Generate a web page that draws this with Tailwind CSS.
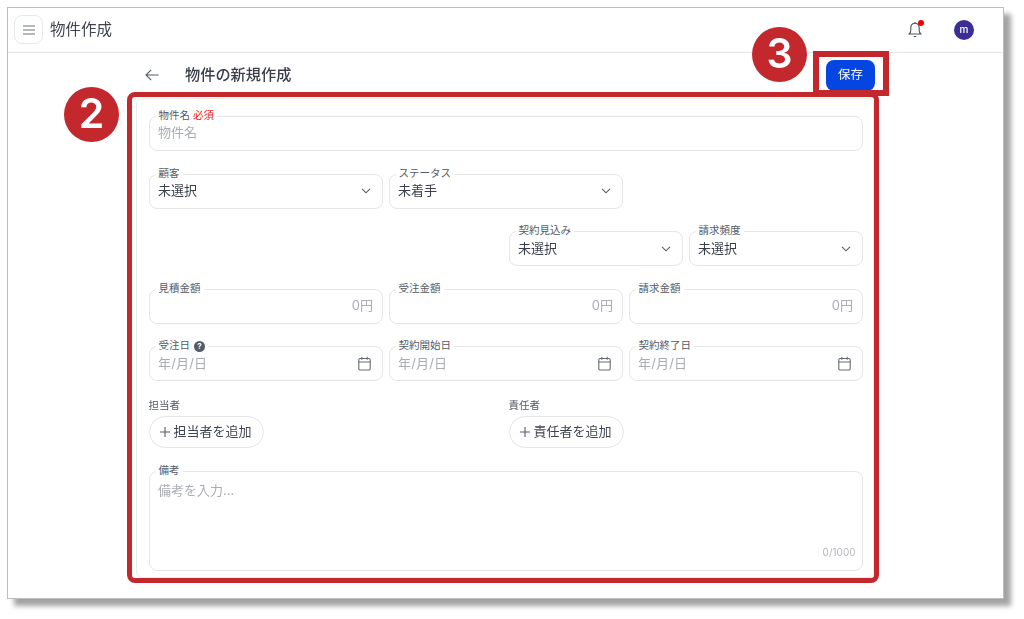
<!DOCTYPE html>
<html lang="ja">
<head>
<meta charset="utf-8">
<script src="https://cdn.jsdelivr.net/npm/@tailwindcss/browser@4"></script>
</head>
<body class="bg-white">
<div class="relative w-[1024px] h-[619px] overflow-hidden bg-white font-['Inter','Noto_Sans_CJK_JP',sans-serif] pl-[7px] pt-[7px]">
  <div class="w-[997px] h-[592px] bg-white border-[1.5px] border-[#bdbdbd] shadow-[7px_7px_5px_rgba(0,0,0,0.36)] flex flex-col blur-[0.4px]">
    <header class="h-[44.5px] shrink-0 border-b border-[#e6e6e6] flex items-center pl-[6px] pr-[29px]">
      <button class="w-[29px] h-[29px] border border-[#e8e8e8] rounded-lg flex items-center justify-center">
        <svg width="14" height="10" viewBox="0 0 14 10" fill="none" stroke="#6b7280" stroke-width="1.2"><path d="M1 1h12M1 5h12M1 9h12"/></svg>
      </button>
      <h1 class="ml-[7px] text-[15.5px] text-[#3f4450]">物件作成</h1>
      <div class="ml-auto flex items-center gap-[29px]">
        <div class="relative w-[20px] h-[20px] flex items-center justify-center -mt-[1px]">
          <svg width="14" height="17" viewBox="0 0 14 17" fill="none" stroke="#4b5563" stroke-width="1.1"><path d="M1.2 13h11.6c-1-1-1.6-2-1.6-3.5V6.500A4.200 4.200 0 0 0 7 2.200 4.200 4.200 0 0 0 2.800 6.500V9.500C2.800 11 2.200 12 1.200 13Z"/><path d="M7 1v1.200M5.800 15.500h2.400"/></svg>
          <span class="absolute top-[1px] right-[1px] w-[6px] h-[6px] rounded-full bg-[#f00000]"></span>
        </div>
        <div class="w-[20px] h-[20px] rounded-full bg-[#3a2e96] text-white text-[10px] font-medium flex items-center justify-center">m</div>
      </div>
    </header>
    <main class="ml-[128px] w-[738px]">
      <div class="h-[45px] flex items-center pl-[9px]">
        <svg width="14" height="12" viewBox="0 0 14 12" fill="none" stroke="#555b66" stroke-width="1.1"><path d="M13.500 6H1M6.200 .8 1 6l5.200 5.200"/></svg>
        <h2 class="ml-[26px] text-[15.2px] font-medium text-[#3a3f4a]">物件の新規作成</h2>
        <button class="ml-auto -mr-[1px] w-[49px] h-[31px] rounded-lg bg-[#0546e3] text-white text-[12.500px]">保存</button>
      </div>
      <form class="h-[480px] border border-[#ececec] rounded-md pt-[17px] pl-[11.500px] pr-[10.500px] flex flex-col">
        <div class="relative h-[35px] w-full border border-[#e6e6e6] rounded-lg flex items-center px-[8.500px]">
          <label class="absolute -top-[8px] left-[6px] px-[3px] bg-white text-[10.500px] leading-[14px] text-[#555b66]">物件名 <span class="text-[#ee1c25]">必須</span></label>
          <span class="text-[13px] text-[#a9adb3]">物件名</span>
        </div>

        <div class="grid grid-cols-12 gap-x-[6px] mt-[23px]">
          <div class="col-span-4 relative h-[35px] border border-[#e6e6e6] rounded-lg flex items-center justify-between px-[8.500px] pr-[11px]">
            <label class="absolute -top-[8px] left-[6px] px-[3px] bg-white text-[10.500px] leading-[14px] text-[#555b66]">顧客</label>
            <span class="text-[13px] text-[#3a3f4a]">未選択</span>
            <svg width="10" height="6" viewBox="0 0 10 6" fill="none" stroke="#555b66" stroke-width="1.1"><path d="m1 .8 4 4 4-4"/></svg>
          </div>
          <div class="col-span-4 relative h-[35px] border border-[#e6e6e6] rounded-lg flex items-center justify-between px-[8.500px] pr-[11px]">
            <label class="absolute -top-[8px] left-[6px] px-[3px] bg-white text-[10.500px] leading-[14px] text-[#555b66]">ステータス</label>
            <span class="text-[13px] text-[#3a3f4a]">未着手</span>
            <svg width="10" height="6" viewBox="0 0 10 6" fill="none" stroke="#555b66" stroke-width="1.1"><path d="m1 .8 4 4 4-4"/></svg>
          </div>
        </div>

        <div class="grid grid-cols-12 gap-x-[6px] mt-[22.500px]">
          <div class="col-start-7 col-span-3 relative h-[35px] border border-[#e6e6e6] rounded-lg flex items-center justify-between px-[8.500px] pr-[11px]">
            <label class="absolute -top-[8px] left-[6px] px-[3px] bg-white text-[10.500px] leading-[14px] text-[#555b66]">契約見込み</label>
            <span class="text-[13px] text-[#3a3f4a]">未選択</span>
            <svg width="10" height="6" viewBox="0 0 10 6" fill="none" stroke="#555b66" stroke-width="1.1"><path d="m1 .8 4 4 4-4"/></svg>
          </div>
          <div class="col-span-3 relative h-[35px] border border-[#e6e6e6] rounded-lg flex items-center justify-between px-[8.500px] pr-[11px]">
            <label class="absolute -top-[8px] left-[6px] px-[3px] bg-white text-[10.500px] leading-[14px] text-[#555b66]">請求頻度</label>
            <span class="text-[13px] text-[#3a3f4a]">未選択</span>
            <svg width="10" height="6" viewBox="0 0 10 6" fill="none" stroke="#555b66" stroke-width="1.1"><path d="m1 .8 4 4 4-4"/></svg>
          </div>
        </div>

        <div class="grid grid-cols-12 gap-x-[6px] mt-[22.500px]">
          <div class="col-span-4 relative h-[35px] border border-[#e6e6e6] rounded-lg flex items-center justify-end px-[8.500px]">
            <label class="absolute -top-[8px] left-[6px] px-[3px] bg-white text-[10.500px] leading-[14px] text-[#555b66]">見積金額</label>
            <span class="text-[13px] text-[#a9adb3]">0円</span>
          </div>
          <div class="col-span-4 relative h-[35px] border border-[#e6e6e6] rounded-lg flex items-center justify-end px-[8.500px]">
            <label class="absolute -top-[8px] left-[6px] px-[3px] bg-white text-[10.500px] leading-[14px] text-[#555b66]">受注金額</label>
            <span class="text-[13px] text-[#a9adb3]">0円</span>
          </div>
          <div class="col-span-4 relative h-[35px] border border-[#e6e6e6] rounded-lg flex items-center justify-end px-[8.500px]">
            <label class="absolute -top-[8px] left-[6px] px-[3px] bg-white text-[10.500px] leading-[14px] text-[#555b66]">請求金額</label>
            <span class="text-[13px] text-[#a9adb3]">0円</span>
          </div>
        </div>

        <div class="grid grid-cols-12 gap-x-[6px] mt-[22.500px]">
          <div class="col-span-4 relative h-[35px] border border-[#e6e6e6] rounded-lg flex items-center justify-between px-[8.500px] pr-[11px]">
            <label class="absolute -top-[8px] left-[6px] px-[3px] bg-white text-[10.500px] leading-[14px] text-[#555b66] flex items-center gap-[4px]">受注日 <span class="w-[11px] h-[11px] rounded-full bg-[#565b66] text-white text-[8px] font-bold leading-[11px] text-center">?</span></label>
            <span class="text-[13px] tracking-[0.15px] text-[#a9adb3]">年/月/日</span>
            <svg width="13" height="15" viewBox="0 0 13 15" fill="none" stroke="#666b75" stroke-width="1.1"><rect x=".8" y="2.500" width="11.400" height="11.500" rx="1.300"/><path d="M.8 6h11.400M3.800 .8v3M9.200 .8v3"/></svg>
          </div>
          <div class="col-span-4 relative h-[35px] border border-[#e6e6e6] rounded-lg flex items-center justify-between px-[8.500px] pr-[11px]">
            <label class="absolute -top-[8px] left-[6px] px-[3px] bg-white text-[10.500px] leading-[14px] text-[#555b66]">契約開始日</label>
            <span class="text-[13px] tracking-[0.15px] text-[#a9adb3]">年/月/日</span>
            <svg width="13" height="15" viewBox="0 0 13 15" fill="none" stroke="#666b75" stroke-width="1.1"><rect x=".8" y="2.500" width="11.400" height="11.500" rx="1.300"/><path d="M.8 6h11.400M3.800 .8v3M9.200 .8v3"/></svg>
          </div>
          <div class="col-span-4 relative h-[35px] border border-[#e6e6e6] rounded-lg flex items-center justify-between px-[8.500px] pr-[11px]">
            <label class="absolute -top-[8px] left-[6px] px-[3px] bg-white text-[10.500px] leading-[14px] text-[#555b66]">契約終了日</label>
            <span class="text-[13px] tracking-[0.15px] text-[#a9adb3]">年/月/日</span>
            <svg width="13" height="15" viewBox="0 0 13 15" fill="none" stroke="#666b75" stroke-width="1.1"><rect x=".8" y="2.500" width="11.400" height="11.500" rx="1.300"/><path d="M.8 6h11.400M3.800 .8v3M9.200 .8v3"/></svg>
          </div>
        </div>

        <div class="grid grid-cols-2 gap-x-[6px] mt-[18px]">
          <div class="flex flex-col items-start">
            <span class="text-[10.500px] leading-[14px] text-[#555b66] mb-[3px]">担当者</span>
            <button type="button" class="h-[32px] w-[115px] border border-[#e6e6e6] rounded-full flex items-center justify-center gap-[3px] text-[13px] text-[#3f4450]">
              <svg width="10" height="10" viewBox="0 0 10 10" fill="none" stroke="#555b66" stroke-width="1.1"><path d="M5 0v10M0 5h10"/></svg>担当者を追加
            </button>
          </div>
          <div class="flex flex-col items-start">
            <span class="text-[10.500px] leading-[14px] text-[#555b66] mb-[3px]">責任者</span>
            <button type="button" class="h-[32px] w-[115px] border border-[#e6e6e6] rounded-full flex items-center justify-center gap-[3px] text-[13px] text-[#3f4450]">
              <svg width="10" height="10" viewBox="0 0 10 10" fill="none" stroke="#555b66" stroke-width="1.1"><path d="M5 0v10M0 5h10"/></svg>責任者を追加
            </button>
          </div>
        </div>

        <div class="relative h-[100px] mt-[23px] border border-[#e6e6e6] rounded-lg px-[8.500px] pt-[9px]">
          <label class="absolute -top-[8px] left-[6px] px-[3px] bg-white text-[10.500px] leading-[14px] text-[#555b66]">備考</label>
          <span class="block text-[13px] leading-[18px] text-[#a9adb3]">備考を入力...</span>
          <span class="absolute right-[6px] bottom-[11px] text-[10px] leading-[14px] text-[#b5b8bd]">0/1000</span>
        </div>
      </form>
    </main>
  </div>

  <div class="absolute left-[127px] top-[92px] w-[751.500px] h-[491px] border-[5.500px] border-[#c3282d] rounded-lg"></div>
  <div class="absolute left-[813px] top-[51px] w-[76px] h-[45px] border-[6px] border-[#c3282d]"></div>
  <div class="absolute left-[64px] top-[86.500px] w-[55px] h-[55px] rounded-full bg-[#c3282d] text-white text-[41px] font-semibold flex items-center justify-center font-['Inter',sans-serif]">2</div>
  <div class="absolute left-[752px] top-[26.500px] w-[55px] h-[55px] rounded-full bg-[#c3282d] text-white text-[41px] font-semibold flex items-center justify-center font-['Inter',sans-serif]">3</div>
</div>
</body>
</html>
